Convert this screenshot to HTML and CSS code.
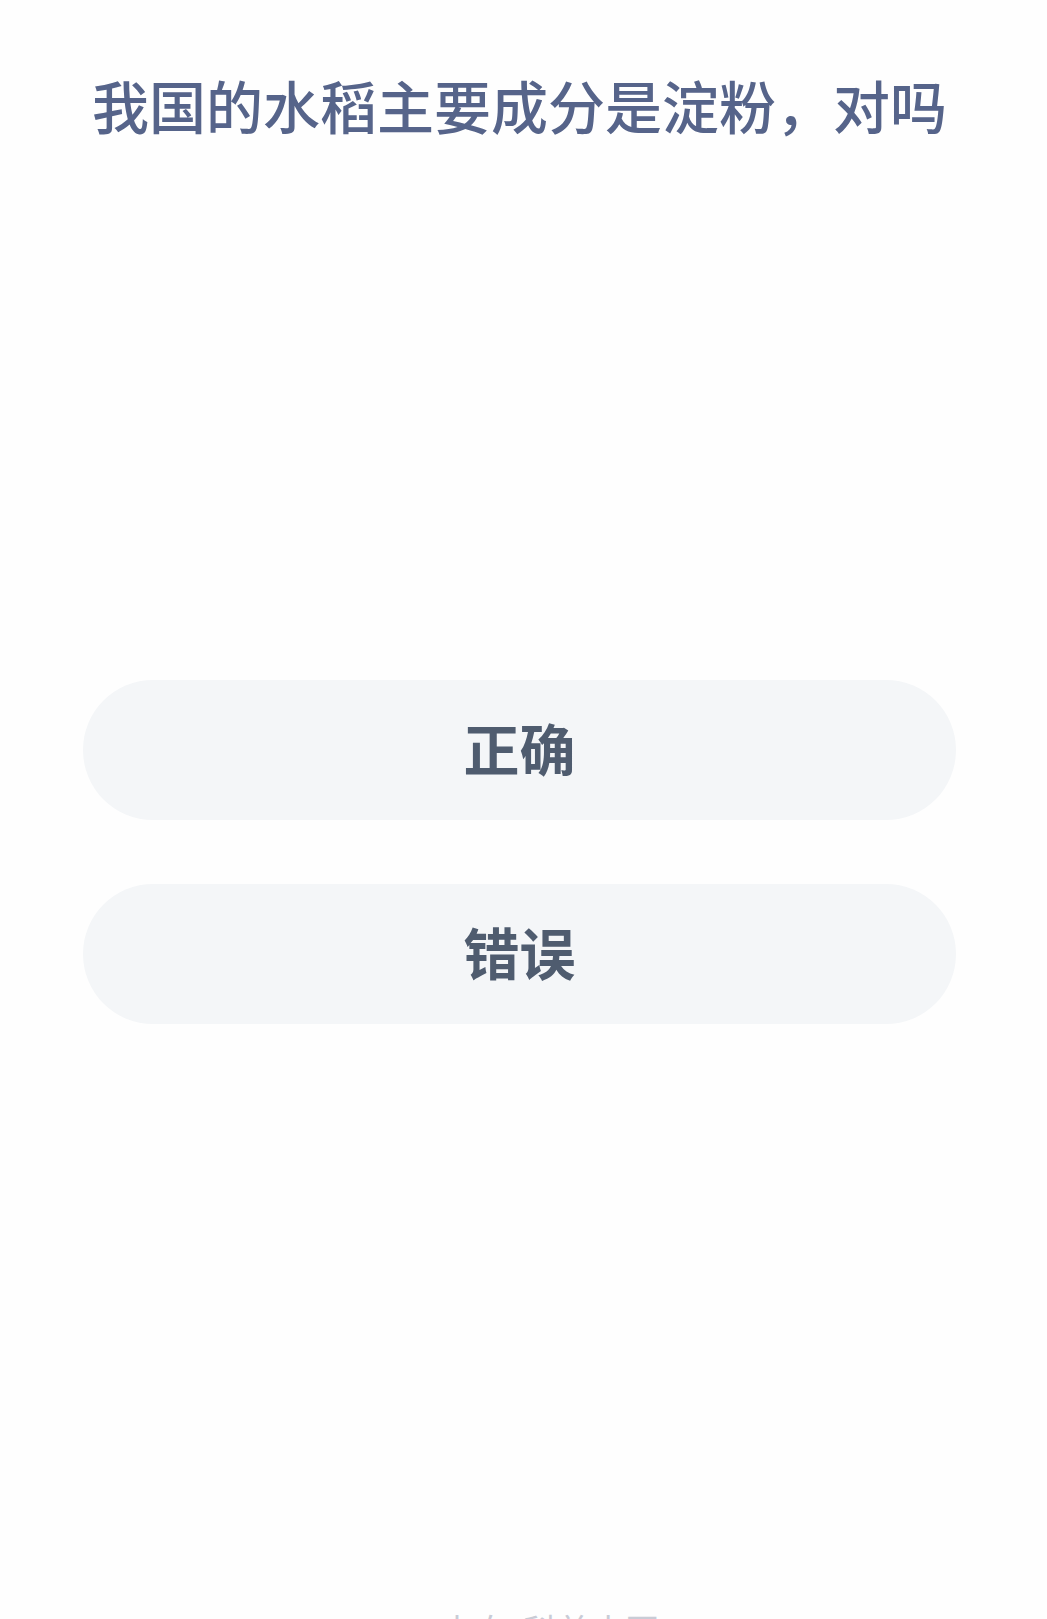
FILE: index.html
```html
<!DOCTYPE html>
<html lang="zh-CN">
<head>
    <meta charset="UTF-8">
    <meta name="viewport" content="width=device-width, initial-scale=1.0">
    <title>答题</title>
    <link rel="stylesheet" href="styles.css">
</head>
<body>
    <div class="quiz">
        <h1 class="question">我国的水稻主要成分是淀粉，对吗</h1>

        <div class="options">
            <button class="option-btn">正确</button>
            <button class="option-btn">错误</button>
        </div>

        <p class="footer-tip">来自&nbsp;&nbsp;科普中国</p>
    </div>
</body>
</html>
```

FILE: styles.css
```css
:root {
    --title-blue: #56648a;   /* 题目文字 */
    --btn-text: #4f5c6f;     /* 选项文字 */
    --btn-bg: #f4f6f8;       /* 选项底色 */
}

* {
    margin: 0;
    padding: 0;
    box-sizing: border-box;
    font-family: "Noto Sans CJK SC", "Noto Sans", sans-serif;
}

body {
    background: #fefefe;
    height: 1619px;
    overflow: hidden;
}

.quiz {
    width: 873px;
    margin-left: 83px;
}

.question {
    padding-top: 64px;
    font-size: 57px;
    font-weight: 500;
    line-height: 80px;
    color: var(--title-blue);
    text-align: center;
    white-space: nowrap;
}

.options {
    margin-top: 536px;
    display: flex;
    flex-direction: column;
    gap: 64px;
}

.option-btn {
    height: 140px;
    padding-bottom: 8px;
    border: none;
    border-radius: 70px;
    background: var(--btn-bg);
    color: var(--btn-text);
    font-size: 56px;
    font-weight: 700;
    cursor: pointer;
}

.footer-tip {
    margin-top: 589px;
    padding-left: 357px;
    font-size: 34px;
    line-height: 34px;
    color: #c9ccd6;
}
```
